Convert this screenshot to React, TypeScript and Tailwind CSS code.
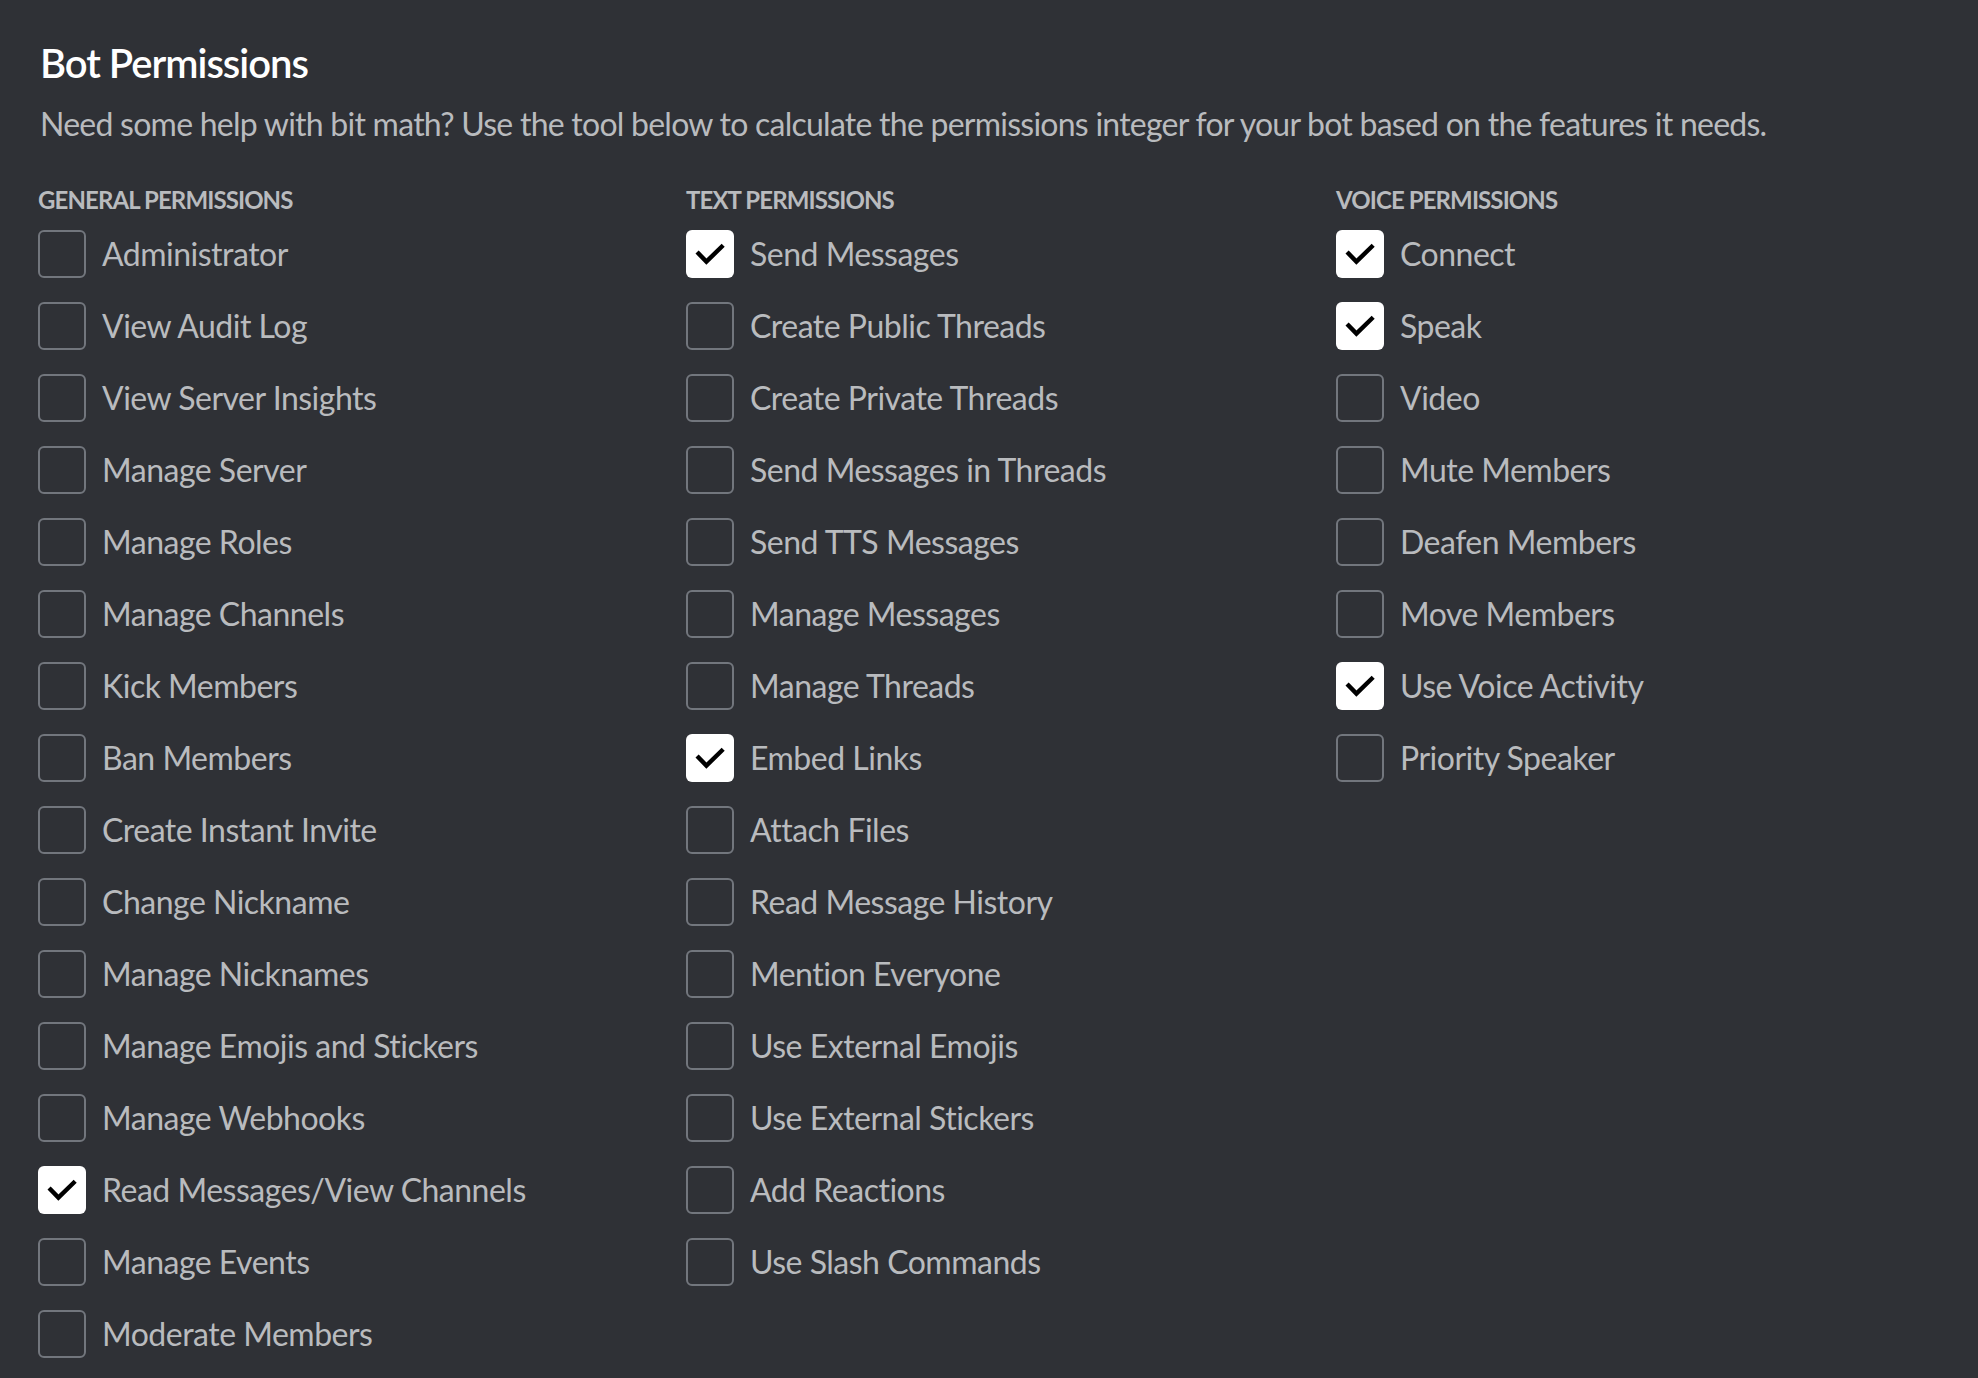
import React from "react";

type Perm = { label: string; checked?: boolean };

const general: Perm[] = [
  { label: "Administrator" },
  { label: "View Audit Log" },
  { label: "View Server Insights" },
  { label: "Manage Server" },
  { label: "Manage Roles" },
  { label: "Manage Channels" },
  { label: "Kick Members" },
  { label: "Ban Members" },
  { label: "Create Instant Invite" },
  { label: "Change Nickname" },
  { label: "Manage Nicknames" },
  { label: "Manage Emojis and Stickers" },
  { label: "Manage Webhooks" },
  { label: "Read Messages/View Channels", checked: true },
  { label: "Manage Events" },
  { label: "Moderate Members" },
];

const text: Perm[] = [
  { label: "Send Messages", checked: true },
  { label: "Create Public Threads" },
  { label: "Create Private Threads" },
  { label: "Send Messages in Threads" },
  { label: "Send TTS Messages" },
  { label: "Manage Messages" },
  { label: "Manage Threads" },
  { label: "Embed Links", checked: true },
  { label: "Attach Files" },
  { label: "Read Message History" },
  { label: "Mention Everyone" },
  { label: "Use External Emojis" },
  { label: "Use External Stickers" },
  { label: "Add Reactions" },
  { label: "Use Slash Commands" },
];

const voice: Perm[] = [
  { label: "Connect", checked: true },
  { label: "Speak", checked: true },
  { label: "Video" },
  { label: "Mute Members" },
  { label: "Deafen Members" },
  { label: "Move Members" },
  { label: "Use Voice Activity", checked: true },
  { label: "Priority Speaker" },
];

function Box({ checked }: { checked?: boolean }) {
  if (checked) {
    return (
      <div className="w-[48px] h-[48px] shrink-0 rounded-[6px] bg-white flex items-center justify-center">
        <svg width="48" height="48" viewBox="0 0 24 24" fill="none">
          <path
            d="M6.3 11.8 L10.2 15.8 L17.8 8.4"
            stroke="#000"
            strokeWidth="2.2"
            strokeLinecap="square"
            strokeLinejoin="miter"
          />
        </svg>
      </div>
    );
  }
  return <div className="w-[48px] h-[48px] shrink-0 rounded-[6px] border-2 border-[#72767d]" />;
}

function Column({ title, items }: { title: string; items: Perm[] }) {
  return (
    <div className="flex flex-col">
      <div className="text-[24px] leading-[32px] font-bold tracking-[-0.9px] text-[#b9bbbe] uppercase">{title}</div>
      <div className="mt-[14px] flex flex-col gap-[24px]">
        {items.map((p) => (
          <div key={p.label} className="flex items-center h-[48px]">
            <Box checked={p.checked} />
            <span className="ml-[16px] text-[32px] leading-[40px] tracking-[-0.5px] text-[#b9bbbe] whitespace-nowrap -mt-[1px]">
              {p.label}
            </span>
          </div>
        ))}
      </div>
    </div>
  );
}

export default function App() {
  return (
    <div
      className="min-h-screen bg-[#2f3136] pl-[38px] pt-[39px] pb-[40px]"
      style={{ fontFamily: "Lato, 'Noto Sans', sans-serif" }}
    >
      <h1 className="text-[40px] leading-[48px] font-semibold tracking-[-1px] text-white ml-[2px]">Bot Permissions</h1>
      <p className="mt-[17px] text-[32px] leading-[40px] tracking-[-0.75px] text-[#b9bbbe] ml-[2px]">
        Need some help with bit math? Use the tool below to calculate the permissions integer for your bot based on the
        features it needs.
      </p>
      <div className="mt-[40px] grid grid-cols-[648px_650px_1fr]">
        <Column title="General Permissions" items={general} />
        <Column title="Text Permissions" items={text} />
        <Column title="Voice Permissions" items={voice} />
      </div>
    </div>
  );
}
